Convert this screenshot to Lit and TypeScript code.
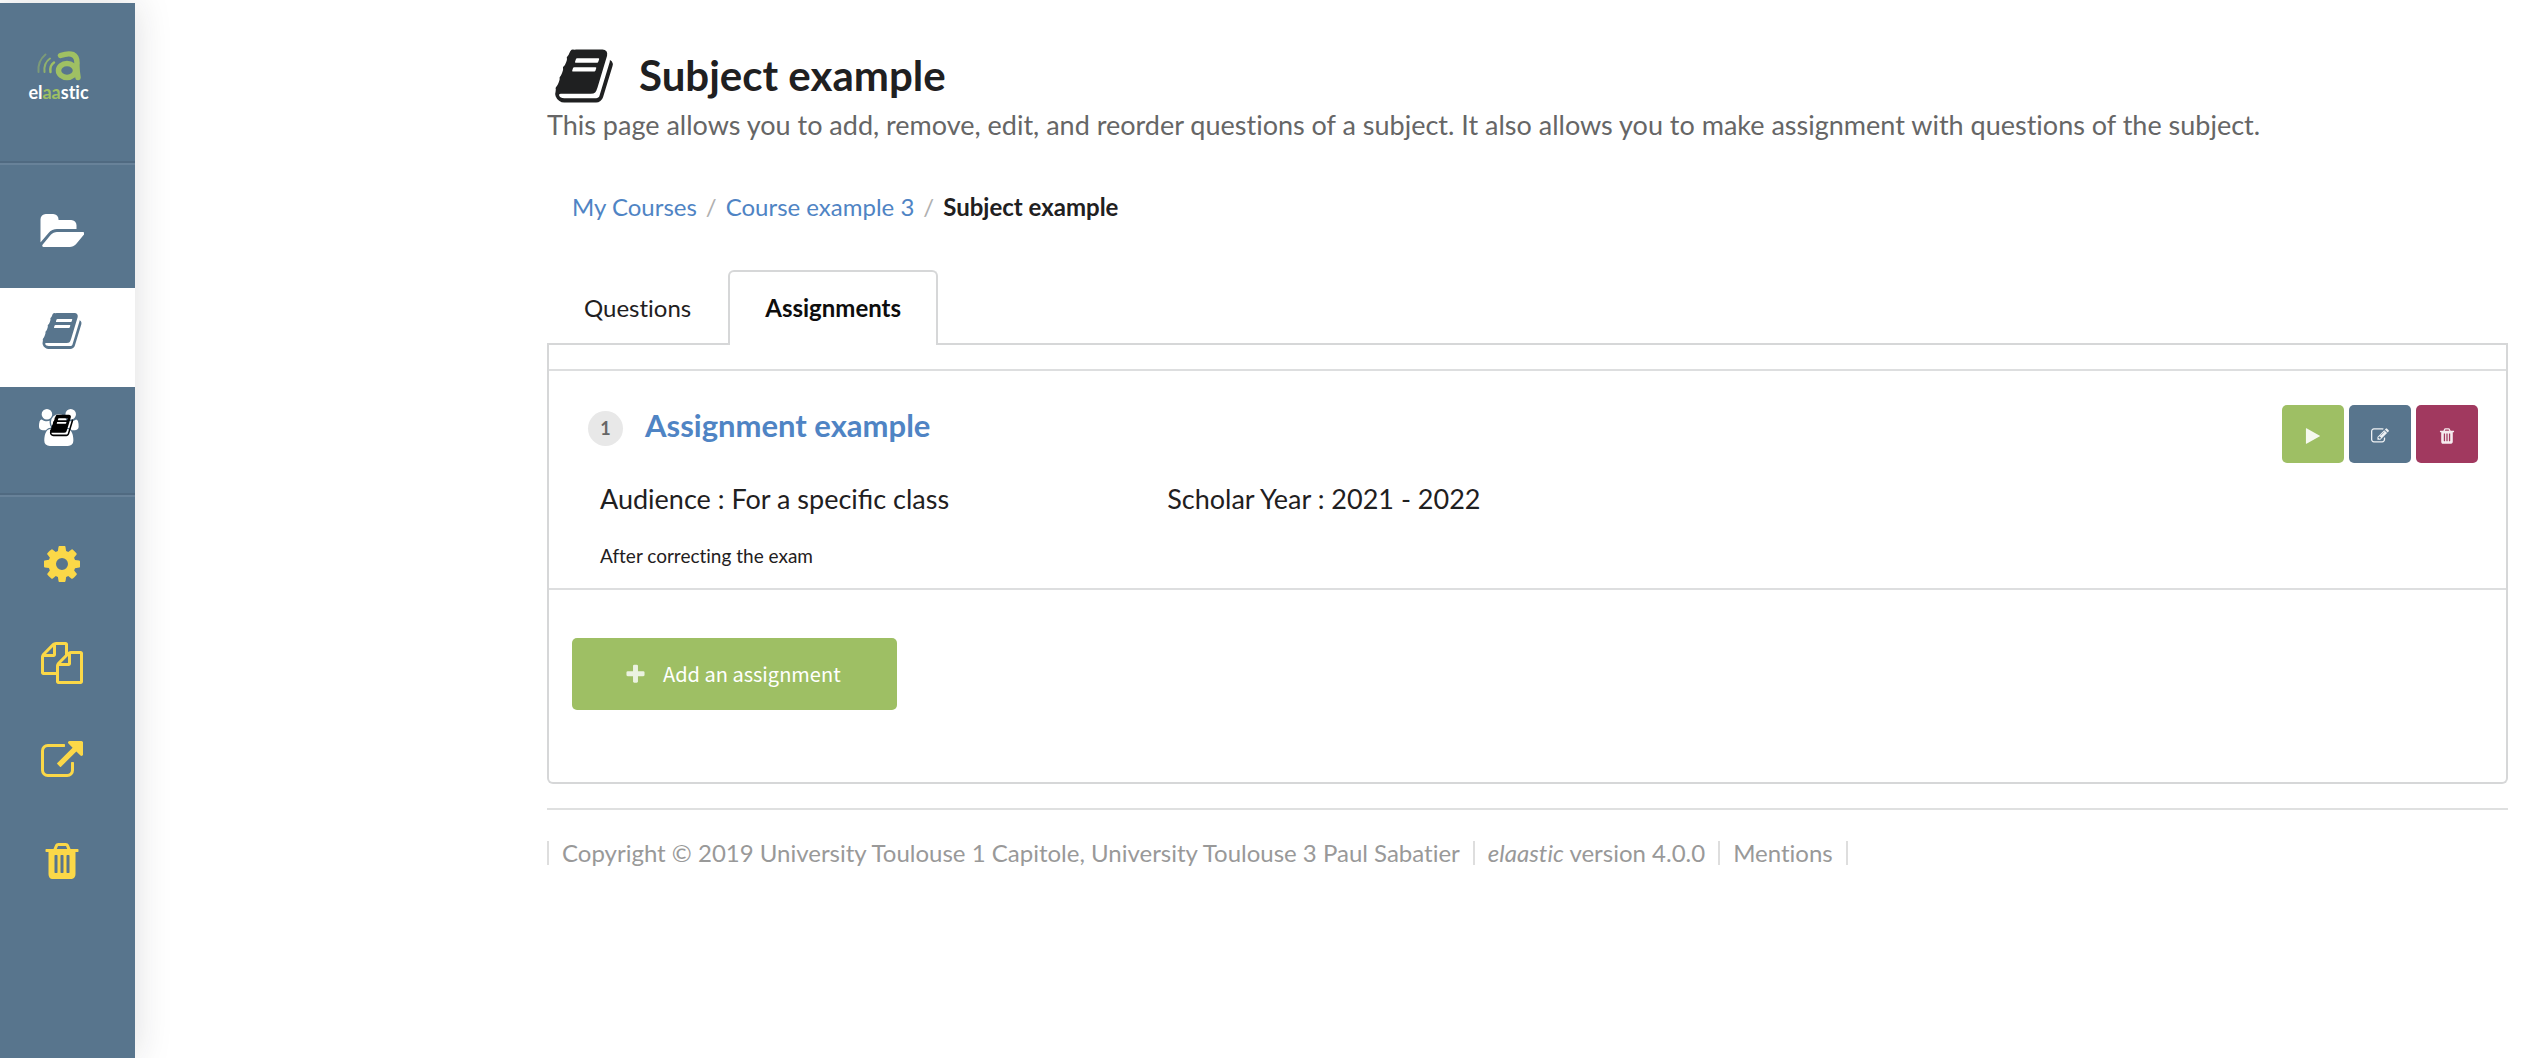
import { LitElement, html, css, svg } from "lit";
import { customElement, property } from "lit/decorators.js";

interface Glyph {
  width: number;
  path: string;
}

const glyphs: Record<string, Glyph> = {
  folder: {
    width: 1944,
    path: "M1943 952q0 31-31 66l-336 396q-43 51-120.5 86.5t-143.5 35.5h-1088q-34 0-60.5-13t-26.5-43q0-31 31-66l336-396q43-51 120.5-86.5t143.5-35.5h1088q34 0 60.5 13t26.5 43zm-343-344v160h-832q-94 0-197 47.5t-164 119.5l-337 396-5 6q0-4-.5-12.5t-.5-12.5v-960q0-92 66-158t158-66h320q92 0 158 66t66 158v32h544q92 0 158 66t66 158z",
  },
  book: {
    width: 1792,
    path: "M1703 478q40 57 18 129l-275 906q-19 64-76.5 107.5t-122.5 43.5h-923q-77 0-148.5-53.5t-99.500-131.5q-24-67-2-127 0-4 3-27t4-37q1-8-3-21.500t-3-19.500q2-11 8-21t16.500-23.500 16.500-23.500q23-38 45-91.500t30-91.500q3-10 .5-30t-.5-28q3-11 17-28t17-23q21-36 42-92t25-90q1-9-2.500-32t.5-28q4-13 22-30.500t22-22.500q19-26 42.500-84.500t27.500-96.500q1-8-3-25.500t-2-26.500q2-8 9-18t18-23 17-21q8-12 16.500-30.500t15-35 16-36 19.500-32 26.500-23.500 36-11.500 47.500 5.500l-1 3q38-9 51-9h761q74 0 114 56t18 130l-274 906q-36 119-71.500 153.500t-128.500 34.500h-869q-27 0-38 15-11 16-1 43 24 70 144 70h923q29 0 56-15.500t35-41.500l300-987q7-22 5-57 38 15 59 43zm-1064 2q-4 13 2 22.500t20 9.500h608q13 0 25.500-9.500t16.500-22.500l21-64q4-13-2-22.500t-20-9.500h-608q-13 0-25.500 9.500t-16.500 22.500zm-83 256q-4 13 2 22.500t20 9.500h608q13 0 25.500-9.500t16.500-22.500l21-64q4-13-2-22.500t-20-9.500h-608q-13 0-25.500 9.500t-16.500 22.500z",
  },
  users: {
    width: 1920,
    path: "M593 896q-162 5-265 128h-134q-82 0-138-40.500t-56-118.500q0-353 124-353 6 0 43.500 21t97.500 42.500 119 21.500q67 0 133-23-5 37-5 66 0 139 81 256zm1071 637q0 120-73 189.500t-194 69.500h-874q-121 0-194-69.500t-73-189.500q0-53 3.500-103.500t14-109 26.500-108.500 43-97.500 62-81 85.500-53.500 111.500-20q10 0 43 21.500t73 48 107 48 135 21.500 135-21.500 107-48 73-48 43-21.500q61 0 111.500 20t85.500 53.500 62 81 43 97.500 26.500 108.500 14 109 3.500 103.500zm-1024-1277q0 106-75 181t-181 75-181-75-75-181 75-181 181-75 181 75 75 181zm704 384q0 159-112.500 271.500t-271.500 112.500-271.500-112.500-112.500-271.500 112.500-271.500 271.500-112.500 271.500 112.500 112.500 271.500zm576 225q0 78-56 118.500t-138 40.500h-134q-103-123-265-128 81-117 81-256 0-29-5-66 66 23 133 23 59 0 119-21.500t97.500-42.500 43.500-21q124 0 124 353zm-128-609q0 106-75 181t-181 75-181-75-75-181 75-181 181-75 181 75 75 181z",
  },
  cog: {
    width: 1792,
    path: "M1152 896q0-106-75-181t-181-75-181 75-75 181 75 181 181 75 181-75 75-181zm512-109v222q0 12-8 23t-20 13l-185 28q-19 54-39 91 35 50 107 138 10 12 10 25t-9 23q-27 37-99 108t-94 71q-12 0-26-9l-138-108q-44 23-91 38-16 136-29 186-7 28-36 28h-222q-14 0-24.500-8.500t-11.500-21.500l-28-184q-49-16-90-37l-141 107q-10 9-25 9-14 0-25-11-126-114-165-168-7-10-7-23 0-12 8-23 15-21 51-66.500t54-70.500q-27-50-41-99l-183-27q-13-2-21-12.500t-8-23.500v-222q0-12 8-23t19-13l186-28q14-46 39-92-40-57-107-138-10-12-10-24 0-10 9-23 26-36 98.500-107.500t94.500-71.500q13 0 26 10l138 107q44-23 91-38 16-136 29-186 7-28 36-28h222q14 0 24.500 8.500t11.500 21.500l28 184q49 16 90 37l142-107q9-9 24-9 13 0 25 10 129 119 165 170 7 8 7 22 0 12-8 23-15 21-51 66.500t-54 70.500q26 50 41 98l183 28q13 2 21 12.500t8 23.500z",
  },
  copy: {
    width: 1792,
    path: "M1696 384q40 0 68 28t28 68v1216q0 40-28 68t-68 28h-960q-40 0-68-28t-28-68v-288h-544q-40 0-68-28t-28-68v-672q0-40 20-88t48-76l408-408q28-28 76-48t88-20h416q40 0 68 28t28 68v328q68-40 128-40h416zm-544 213l-299 299h299v-299zm-640-384l-299 299h299v-299zm196 647l316-316v-416h-384v416q0 40-28 68t-68 28h-416v640h512v-256q0-40 20-88t48-76zm956 804v-1152h-384v416q0 40-28 68t-68 28h-416v640h896z",
  },
  external: {
    width: 1792,
    path: "M1408 928v320q0 119-84.500 203.500t-203.500 84.500h-832q-119 0-203.500-84.500t-84.500-203.500v-832q0-119 84.500-203.500t203.500-84.500h704q14 0 23 9t9 23v64q0 14-9 23t-23 9h-704q-66 0-113 47t-47 113v832q0 66 47 113t113 47h832q66 0 113-47t47-113v-320q0-14 9-23t23-9h64q14 0 23 9t9 23zm384-864v512q0 26-19 45t-45 19-45-19l-176-176-652 652q-10 10-23 10t-23-10l-114-114q-10-10-10-23t10-23l652-652-176-176q-19-19-19-45t19-45 45-19h512q26 0 45 19t19 45z",
  },
  trash: {
    width: 1792,
    path: "M704 1376v-704q0-14-9-23t-23-9h-64q-14 0-23 9t-9 23v704q0 14 9 23t23 9h64q14 0 23-9t9-23zm256 0v-704q0-14-9-23t-23-9h-64q-14 0-23 9t-9 23v704q0 14 9 23t23 9h64q14 0 23-9t9-23zm256 0v-704q0-14-9-23t-23-9h-64q-14 0-23 9t-9 23v704q0 14 9 23t23 9h64q14 0 23-9t9-23zm-544-992h448l-48-117q-7-9-17-11h-317q-10 2-17 11zm928 32v64q0 14-9 23t-23 9h-96v948q0 83-47 143.500t-113 60.500h-832q-66 0-113-58.500t-47-141.500v-952h-96q-14 0-23-9t-9-23v-64q0-14 9-23t23-9h309l70-167q15-37 54-63t79-26h320q40 0 79 26t54 63l70 167h309q14 0 23 9t9 23z",
  },
  edit: {
    width: 1792,
    path: "M888 1184l116-116-152-152-116 116v56h96v96h56zm440-720q-16-16-33 1l-350 350q-17 17-1 33t33-1l350-350q17-17 1-33zm80 594v190q0 119-84.500 203.500t-203.500 84.500h-832q-119 0-203.500-84.500t-84.500-203.500v-832q0-119 84.500-203.500t203.500-84.500h832q63 0 117 25 15 7 18 23 3 17-9 29l-49 49q-14 14-32 8-23-6-45-6h-832q-66 0-113 47t-47 113v832q0 66 47 113t113 47h832q66 0 113-47t47-113v-126q0-13 9-22l64-64q15-15 35-7t20 29zm-96-738l288 288-672 672h-288v-288zm444 132l-92 92-288-288 92-92q28-28 68-28t68 28l152 152q28 28 28 68t-28 68z",
  },
  plus: {
    width: 1792,
    path: "M1600 736v192q0 40-28 68t-68 28h-416v416q0 40-28 68t-68 28h-192q-40 0-68-28t-28-68v-416h-416q-40 0-68-28t-28-68v-192q0-40 28-68t68-28h416v-416q0-40 28-68t68-28h192q40 0 68 28t28 68v416h416q40 0 68 28t28 68z",
  },
  play: {
    width: 1792,
    path: "M1576 927l-1328 738q-23 13-39.500 3t-16.500-36v-1472q0-26 16.500-36t39.500 3l1328 738q23 13 23 31t-23 31z",
  },
};

/** Single-colour icon that takes its height from font-size. */
@customElement("el-icon")
export class ElIcon extends LitElement {
  @property() name = "book";

  static styles = css`
    :host {
      display: inline-flex;
      line-height: 0;
    }
    .glyph {
      height: 1em;
      fill: currentColor;
    }
  `;

  render() {
    const glyph = glyphs[this.name];
    return html`<svg class="glyph" viewBox="0 0 ${glyph.width} 1792" aria-hidden="true">
      ${svg`<path d=${glyph.path}></path>`}
    </svg>`;
  }
}

@customElement("side-bar")
export class SideBar extends LitElement {
  static styles = css`
    :host {
      display: flex;
      flex-direction: column;
      flex: none;
      box-sizing: border-box;
      width: 135px;
      margin-top: 3px;
      background: #58758d;
      box-shadow: 0 0 35px rgba(34, 36, 38, 0.15);
    }
    .brand {
      display: flex;
      flex-direction: column;
      align-items: center;
      height: 111px;
      padding: 47px 18px 0 0;
      text-decoration: none;
    }
    .mark {
      width: 46px;
      height: 32px;
    }
    .name {
      font-size: 18px;
      line-height: 20px;
      font-weight: 700;
      color: #fff;
    }
    .name-accent {
      color: #9fc063;
    }
    .group {
      display: flex;
      flex-direction: column;
      border-top: 2px solid #506a81;
      box-shadow: inset 0 2px 0 #688299;
      padding: 26px 0 7px;
    }
    .tools {
      padding-top: 20px;
      color: #fbd848;
    }
    .item {
      display: flex;
      justify-content: center;
      align-items: flex-start;
      box-sizing: border-box;
      height: 99px;
      padding: 22px 12px 0 0;
      font-size: 42px;
      color: #fff;
    }
    .item.active {
      background: #fff;
      color: #58758d;
    }
    .tools .item {
      padding-top: 28px;
      color: inherit;
    }
    .stack {
      position: relative;
      width: 45px;
      font-size: 37px;
    }
    .badge {
      position: absolute;
      left: 10px;
      top: 4px;
      font-size: 25px;
      color: #000;
    }
  `;

  render() {
    return html`
      <a class="brand" href="#" aria-label="elaastic">
        <svg class="mark" viewBox="0 0 46 32" fill="none" stroke="#9fc063" stroke-linecap="round" aria-hidden="true">
          <path d="M9.500 4.500Q1.500 11 2.500 22" stroke-width="2" opacity=".5"></path>
          <path d="M14 8.500Q7.500 13 8.500 22" stroke-width="2" opacity=".8"></path>
          <path d="M18 12.500Q13.500 15.500 14.500 22" stroke-width="2.400"></path>
          <path d="M24.500 5.500Q41 0 41 13Q40.500 18 42 27.500" stroke-width="5.500"></path>
          <ellipse cx="31" cy="20.500" rx="8.500" ry="7" stroke-width="5.500"></ellipse>
        </svg>
        <span class="name">el<span class="name-accent">aa</span>stic</span>
      </a>
      <nav class="group" aria-label="Main">
        <a class="item" href="#" aria-label="My courses"><el-icon name="folder"></el-icon></a>
        <a class="item active" href="#" aria-label="Subjects" aria-current="page"><el-icon name="book"></el-icon></a>
        <a class="item" href="#" aria-label="Shared subjects">
          <span class="stack">
            <el-icon name="users"></el-icon>
            <el-icon class="badge" name="book"></el-icon>
          </span>
        </a>
      </nav>
      <nav class="group tools" aria-label="Tools">
        <a class="item" href="#" aria-label="Settings"><el-icon name="cog"></el-icon></a>
        <a class="item" href="#" aria-label="Duplicate"><el-icon name="copy"></el-icon></a>
        <a class="item" href="#" aria-label="Share"><el-icon name="external"></el-icon></a>
        <a class="item" href="#" aria-label="Delete"><el-icon name="trash"></el-icon></a>
      </nav>
    `;
  }
}

@customElement("assignment-row")
export class AssignmentRow extends LitElement {
  @property({ type: Number }) rank = 1;
  @property() heading = "";
  @property() audience = "";
  @property() year = "";
  @property() note = "";

  static styles = css`
    :host {
      display: block;
      border: solid #dddedf;
      border-width: 2px 0;
      padding: 34px 28px 20px 39px;
    }
    .top {
      display: flex;
      justify-content: space-between;
      align-items: flex-start;
    }
    .title {
      display: flex;
      align-items: flex-end;
      gap: 22px;
      margin: 0;
      font-size: 31px;
      line-height: 41px;
      font-weight: 700;
    }
    .rank {
      width: 35px;
      border-radius: 50%;
      background: #e8e8e8;
      color: #666;
      font-size: 18px;
      line-height: 35px;
      text-align: center;
    }
    .link {
      color: #4f84c4;
      text-decoration: none;
    }
    .actions {
      display: flex;
      gap: 5px;
    }
    .action {
      display: flex;
      align-items: center;
      justify-content: center;
      width: 62px;
      height: 58px;
      padding: 3px 0 0;
      border: 0;
      border-radius: 5px;
      font-size: 18px;
      color: rgba(255, 255, 255, 0.9);
    }
    .play {
      background: #9ebf64;
    }
    .edit {
      background: #58758d;
    }
    .delete {
      background: #a1395f;
    }
    .facts {
      display: grid;
      grid-template-columns: 5fr 11fr;
      margin: 20px 63px 0 12px;
      font-size: 27px;
      line-height: 32px;
      font-variant-ligatures: normal;
    }
    .note {
      margin: 29px 0 0 12px;
      font-size: 19px;
      line-height: 24px;
    }
  `;

  render() {
    return html`
      <div class="top">
        <h2 class="title">
          <span class="rank">${this.rank}</span>
          <a class="link" href="#">${this.heading}</a>
        </h2>
        <div class="actions">
          <button class="action play" aria-label="Start"><el-icon name="play"></el-icon></button>
          <button class="action edit" aria-label="Edit"><el-icon name="edit"></el-icon></button>
          <button class="action delete" aria-label="Delete"><el-icon name="trash"></el-icon></button>
        </div>
      </div>
      <div class="facts">
        <span>Audience : ${this.audience}</span>
        <span>Scholar Year : ${this.year}</span>
      </div>
      <p class="note">${this.note}</p>
    `;
  }
}

@customElement("app-root")
export class AppRoot extends LitElement {
  static styles = css`
    :host {
      display: flex;
      min-height: 100vh;
      background: #fff;
      color: #1f2021;
      font-family: Lato, "Liberation Sans", sans-serif;
      font-variant-ligatures: none;
    }
    .page {
      flex: 1;
      min-width: 0;
      padding: 45px 14px 40px 412px;
    }
    .heading {
      display: flex;
      gap: 24px;
      height: 63px;
      padding-left: 6px;
    }
    .heading-icon {
      font-size: 62px;
    }
    .heading-title {
      margin: 0;
      font-size: 42px;
      line-height: 60px;
      font-weight: 700;
    }
    .lead {
      margin: 0;
      font-size: 27px;
      line-height: 34px;
      color: #666;
    }
    .crumbs {
      display: flex;
      gap: 9px;
      margin: 50px 0 48px;
      padding-left: 25px;
      font-size: 24px;
      line-height: 30px;
    }
    .crumb {
      color: #4f84c4;
      text-decoration: none;
    }
    .slash {
      color: #b0b0b0;
    }
    .current {
      font-weight: 700;
    }
    .tabs {
      display: flex;
      border-bottom: 2px solid #d6d7d8;
    }
    .tab {
      margin: 0 0 -2px;
      padding: 21px 35px 22px;
      border: 2px solid transparent;
      border-bottom: 0;
      border-radius: 6px 6px 0 0;
      background: none;
      font: inherit;
      font-size: 24px;
      line-height: 30px;
      color: inherit;
    }
    .tab.active {
      border-color: #d6d7d8;
      background: #fff;
      font-weight: 700;
      color: #0d0d0d;
    }
    .panel {
      padding-top: 24px;
      border: 2px solid #d6d7d8;
      border-top: 0;
      border-radius: 0 0 6px 6px;
    }
    .add {
      display: flex;
      align-items: center;
      gap: 16px;
      height: 72px;
      margin: 48px 24px 72px 23px;
      padding: 0 56px 0 52px;
      border: 0;
      border-radius: 5px;
      background: #9ebf64;
      color: #fff;
      font: 400 20px/30px "Noto Sans CJK SC", Lato, sans-serif;
    }
    .add-icon {
      font-size: 23px;
      opacity: 0.8;
    }
    .footer {
      display: flex;
      align-items: center;
      gap: 13px;
      margin-top: 24px;
      padding-top: 28px;
      border-top: 2px solid #dfe0e0;
      font-size: 24px;
      line-height: 30px;
      color: #999;
    }
    .bar {
      width: 2px;
      height: 24px;
      background: #dedede;
    }
    .mentions {
      color: inherit;
      text-decoration: none;
    }
  `;

  render() {
    return html`
      <side-bar></side-bar>
      <main class="page">
        <header>
          <div class="heading">
            <el-icon class="heading-icon" name="book"></el-icon>
            <h1 class="heading-title">Subject example</h1>
          </div>
          <p class="lead">
            This page allows you to add, remove, edit, and reorder questions of a subject. It also allows you to make
            assignment with questions of the subject.
          </p>
        </header>
        <nav class="crumbs" aria-label="Breadcrumb">
          <a class="crumb" href="#">My Courses</a>
          <span class="slash">/</span>
          <a class="crumb" href="#">Course example 3</a>
          <span class="slash">/</span>
          <span class="current">Subject example</span>
        </nav>
        <div class="tabs" role="tablist">
          <button class="tab" role="tab" aria-selected="false">Questions</button>
          <button class="tab active" role="tab" aria-selected="true">Assignments</button>
        </div>
        <section class="panel" role="tabpanel">
          <assignment-row
            rank="1"
            heading="Assignment example"
            audience="For a specific class"
            year="2021 - 2022"
            note="After correcting the exam"
          ></assignment-row>
          <button class="add"><el-icon class="add-icon" name="plus"></el-icon>Add an assignment</button>
        </section>
        <footer class="footer">
          <span class="bar"></span>
          <span>Copyright © 2019 University Toulouse 1 Capitole, University Toulouse 3 Paul Sabatier</span>
          <span class="bar"></span>
          <span><em>elaastic</em> version 4.0.0</span>
          <span class="bar"></span>
          <a class="mentions" href="#">Mentions</a>
          <span class="bar"></span>
        </footer>
      </main>
    `;
  }
}
